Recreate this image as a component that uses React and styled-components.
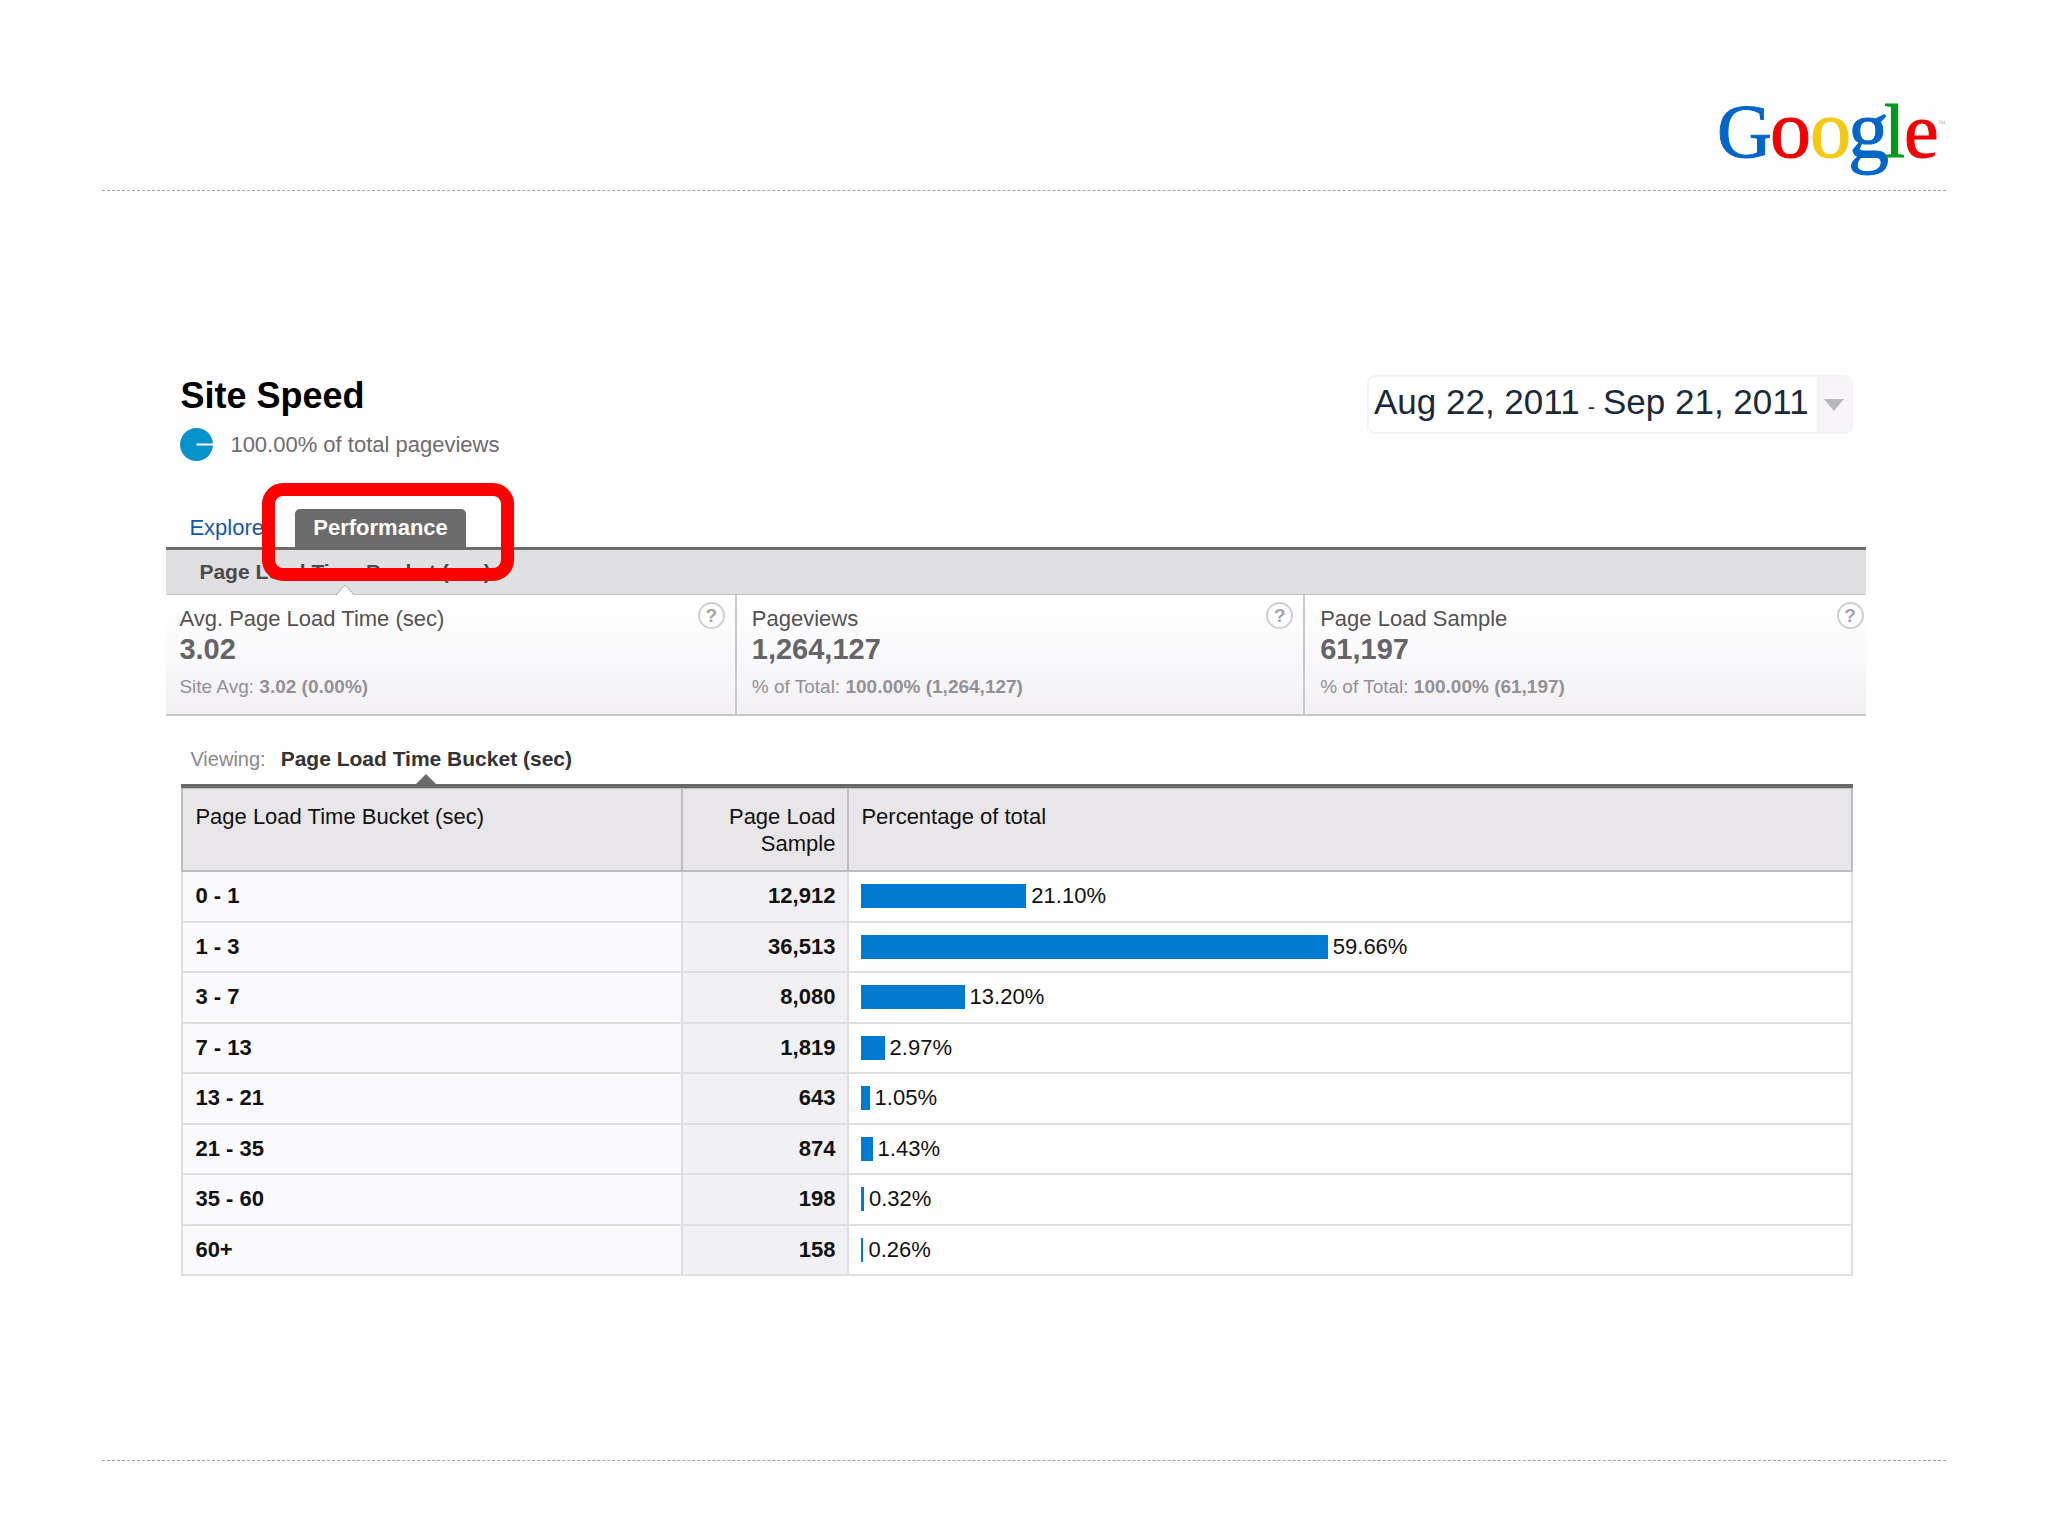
import styled, { createGlobalStyle } from "styled-components";

const GlobalStyle = createGlobalStyle`
  * {
    box-sizing: border-box;
  }

  body {
    margin: 0;
    background: #fefefe;
    color: #111;
    font-family: "Liberation Sans", Arial, sans-serif;
    font-size: 22px;
  }
`;

const Slide = styled.div`
  display: flex;
  flex-direction: column;
  min-height: 100vh;
  padding: 0 5%;
`;

const SlideHeader = styled.header`
  display: flex;
  justify-content: flex-end;
  padding-top: 78px;
  border-bottom: 1px dashed #a3a3a3;
`;

const SlideFooter = styled.footer`
  margin-bottom: 75px;
  border-top: 1px dashed #a3a3a3;
`;

const LogoSvg = styled.svg`
  display: block;
  width: 232px;
  height: 112px;
  font-family: "Liberation Serif", "Times New Roman", serif;
`;

const Report = styled.main`
  flex: 1;
  padding: 184px 80px 40px 64px;
`;

const ReportHead = styled.div`
  display: flex;
  justify-content: space-between;
  align-items: flex-start;
  padding: 0 13px 0 14px;
`;

const Title = styled.h1`
  margin: 0 0 11px;
  color: #000;
  font-size: 36px;
  line-height: 42px;
`;

const Share = styled.p`
  display: flex;
  align-items: center;
  gap: 17px;
  margin: 0;
  color: #6f6b70;
  line-height: 32px;
`;

const DateRange = styled.button`
  display: flex;
  align-items: stretch;
  padding: 0;
  overflow: hidden;
  border: 2px solid #f5f3f6;
  border-radius: 8px;
  background: #fff;
  color: #1b2a3a;
  font: inherit;
  font-size: 35px;
  line-height: 50px;
`;

const DateText = styled.span`
  padding: 0 8px 0 5px;
`;

const DateDash = styled.span`
  padding: 0 8px;
  font-size: 22px;
`;

const DateArrow = styled.span`
  display: flex;
  align-items: center;
  padding: 0 7px;
  background: #f7f5f8;
`;

const Tabs = styled.nav`
  display: flex;
  gap: 6px;
  margin-top: 48px;
  padding-left: 5px;
  border-bottom: 3px solid #6b6b6b;
`;

const Tab = styled.a`
  position: relative;
  padding: 0 18px;
  border-radius: 5px 5px 0 0;
  background: ${({ $active }) => ($active ? "#6b6b6b" : "transparent")};
  color: ${({ $active }) => ($active ? "#fff" : "#1459a3")};
  font-weight: ${({ $active }) => ($active ? 700 : 400)};
  line-height: 38px;
  text-decoration: none;
`;

const Highlight = styled.span`
  position: absolute;
  z-index: 2;
  inset: -26px -48px -34px -33px;
  border: 13px solid #f00;
  border-radius: 21px;
`;

const SubBar = styled.div`
  padding: 0 33px;
  border-bottom: 1px solid #c4c3c5;
  background: #e0dfe1;
`;

const BucketName = styled.strong`
  position: relative;
  display: inline-block;
  color: ${({ $muted }) => ($muted ? "#4a4a4c" : "#333")};
  font-size: 21px;
  line-height: ${({ $muted }) => ($muted ? 44 : 24)}px;
`;

const Notch = styled.svg`
  position: absolute;
  top: 100%;
  left: 50%;
  transform: translate(-50%, ${({ $shift }) => $shift});
`;

const Metrics = styled.section`
  display: grid;
  grid-template-columns: 569fr 569fr 563fr;
  border-bottom: 2px solid #c8c7c9;
  background: linear-gradient(#fff, #fbfafc 45%, #f2f0f3);
`;

const Metric = styled.div`
  display: flex;
  justify-content: space-between;
  align-items: flex-start;
  padding: 7px 10px 15px 15px;
  border-left: 2px solid #c8c7c9;

  &:first-child {
    padding-left: 13px;
    border-left: 0;
  }

  &:last-child {
    padding-right: 2px;
  }
`;

const MetricText = styled.div`
  padding-top: 3px;
`;

const MetricLabel = styled.div`
  color: #555256;
  line-height: 28px;
`;

const MetricValue = styled.div`
  color: #656466;
  font-size: 29px;
  font-weight: 700;
  line-height: 32px;
`;

const MetricNote = styled.div`
  margin-top: 10px;
  color: #939195;
  font-size: 19px;
  line-height: 24px;
`;

const Help = styled.button`
  width: 27px;
  height: 27px;
  padding: 0;
  border: 2px solid #cfced0;
  border-radius: 50%;
  background: transparent;
  color: #a5a4a6;
  font: inherit;
  font-size: 19px;
  font-weight: 700;
  line-height: 22px;
`;

const Viewing = styled.div`
  display: flex;
  gap: 15px;
  margin-top: 31px;
  padding: 0 24px 13px;
  color: #8a888c;
  font-size: 20px;
  line-height: 24px;
`;

const TableWrap = styled.div`
  padding: 0 13px 0 15px;
`;

const Table = styled.table`
  width: 100%;
  height: 492px;
  border-top: 4px solid #6b6b6b;
  border-spacing: 0;
  table-layout: fixed;
`;

const HeadCell = styled.th`
  width: ${({ $width }) => $width || "auto"};
  padding: 14px 12px 13px;
  border: solid #bdbcbe;
  border-width: 1px 0 2px 2px;
  background: #e8e6e9;
  font-weight: 400;
  line-height: 27px;
  text-align: ${({ $align }) => $align || "left"};
  vertical-align: top;

  &:last-child {
    border-right-width: 2px;
  }
`;

const RangeCell = styled.th`
  padding: 0 12px;
  border: solid #dfdee0;
  border-width: 0 0 2px 2px;
  background: #faf9fc;
  text-align: left;
`;

const CountCell = styled.td`
  padding: 0 12px;
  border: solid #dfdee0;
  border-width: 0 0 2px 2px;
  background: #f1f0f2;
  font-weight: 700;
  text-align: right;
`;

const ShareCell = styled.td`
  padding: 0 12px;
  border: solid #dfdee0;
  border-width: 0 2px 2px;
`;

const BarRow = styled.div`
  display: flex;
  align-items: center;
  gap: 5px;
`;

const Bar = styled.span`
  height: 24px;
  min-width: 2px;
  background: #007bd2;
`;

const metrics = [
  {
    label: "Avg. Page Load Time (sec)",
    value: "3.02",
    note: "Site Avg:",
    total: "3.02 (0.00%)",
  },
  {
    label: "Pageviews",
    value: "1,264,127",
    note: "% of Total:",
    total: "100.00% (1,264,127)",
  },
  {
    label: "Page Load Sample",
    value: "61,197",
    note: "% of Total:",
    total: "100.00% (61,197)",
  },
];

const buckets = [
  { range: "0 - 1", sample: "12,912", percent: "21.10" },
  { range: "1 - 3", sample: "36,513", percent: "59.66" },
  { range: "3 - 7", sample: "8,080", percent: "13.20" },
  { range: "7 - 13", sample: "1,819", percent: "2.97" },
  { range: "13 - 21", sample: "643", percent: "1.05" },
  { range: "21 - 35", sample: "874", percent: "1.43" },
  { range: "35 - 60", sample: "198", percent: "0.32" },
  { range: "60+", sample: "158", percent: "0.26" },
];

// a full bar leaves room in the cell for its label
const BAR_SCALE = 0.8;

const logoLetters = [
  { letter: "G", x: 3, size: 76, color: "#0266c8" },
  { letter: "o", x: 56, size: 82, color: "#f00000" },
  { letter: "o", x: 96, size: 82, color: "#f5c914" },
  { letter: "g", x: 134, size: 82, color: "#0266c8" },
  { letter: "l", x: 170, size: 76, color: "#009a1a" },
  { letter: "e", x: 190, size: 78, color: "#f00000" },
];

const Logo = () => (
  <LogoSvg viewBox="0 0 232 112" role="img" aria-label="Google">
    <text strokeWidth="1">
      {logoLetters.map(({ letter, x, size, color }) => (
        <tspan key={x} x={x} y="79" fontSize={size} fill={color} stroke={color}>
          {letter}
        </tspan>
      ))}
    </text>
    <text x="224" y="48" fontSize="8" fill="#b5b5b5">
      ™
    </text>
  </LogoSvg>
);

const App = () => (
  <>
    <GlobalStyle />
    <Slide>
      <SlideHeader>
        <Logo />
      </SlideHeader>
      <Report>
        <ReportHead>
          <div>
            <Title>Site Speed</Title>
            <Share>
              <svg width="33" height="33" viewBox="0 0 33 33" aria-hidden="true">
                <circle cx="16.5" cy="16.5" r="16.5" fill="#0892cb" />
                <path d="M16.5 16.5H33" stroke="#fff" strokeWidth="2" />
              </svg>
              100.00% of total pageviews
            </Share>
          </div>
          <DateRange type="button">
            <DateText>
              Aug 22, 2011<DateDash>-</DateDash>Sep 21, 2011
            </DateText>
            <DateArrow>
              <svg width="20" height="12" viewBox="0 0 20 12" aria-hidden="true">
                <path d="M0 0H20L10 12Z" fill="#b9b8ba" />
              </svg>
            </DateArrow>
          </DateRange>
        </ReportHead>

        <Tabs>
          <Tab href="#explorer">Explorer</Tab>
          <Tab href="#performance" $active>
            Performance
            <Highlight />
          </Tab>
        </Tabs>
        <SubBar>
          <BucketName $muted>
            Page Load Time Bucket (sec)
            <Notch $shift="-9px" width="18" height="10" viewBox="0 0 18 10">
              <path d="M0 10L9 0L18 10Z" fill="#fff" />
              <path
                d="M0 10L9 0L18 10"
                fill="none"
                stroke="#8a898b"
                strokeDasharray="2 1"
              />
            </Notch>
          </BucketName>
        </SubBar>

        <Metrics>
          {metrics.map(({ label, value, note, total }) => (
            <Metric key={label}>
              <MetricText>
                <MetricLabel>{label}</MetricLabel>
                <MetricValue>{value}</MetricValue>
                <MetricNote>
                  {note} <b>{total}</b>
                </MetricNote>
              </MetricText>
              <Help type="button">?</Help>
            </Metric>
          ))}
        </Metrics>

        <Viewing>
          Viewing:
          <BucketName>
            Page Load Time Bucket (sec)
            <Notch $shift="3px" width="20" height="10" viewBox="0 0 20 10">
              <path d="M0 10L10 0L20 10Z" fill="#6b6b6b" />
            </Notch>
          </BucketName>
        </Viewing>
        <TableWrap>
          <Table>
            <thead>
              <tr>
                <HeadCell $width="500px">Page Load Time Bucket (sec)</HeadCell>
                <HeadCell $width="166px" $align="right">
                  Page Load Sample
                </HeadCell>
                <HeadCell>Percentage of total</HeadCell>
              </tr>
            </thead>
            <tbody>
              {buckets.map(({ range, sample, percent }) => (
                <tr key={range}>
                  <RangeCell scope="row">{range}</RangeCell>
                  <CountCell>{sample}</CountCell>
                  <ShareCell>
                    <BarRow>
                      <Bar style={{ width: `${percent * BAR_SCALE}%` }} />
                      {percent}%
                    </BarRow>
                  </ShareCell>
                </tr>
              ))}
            </tbody>
          </Table>
        </TableWrap>
      </Report>
      <SlideFooter />
    </Slide>
  </>
);

export default App;
